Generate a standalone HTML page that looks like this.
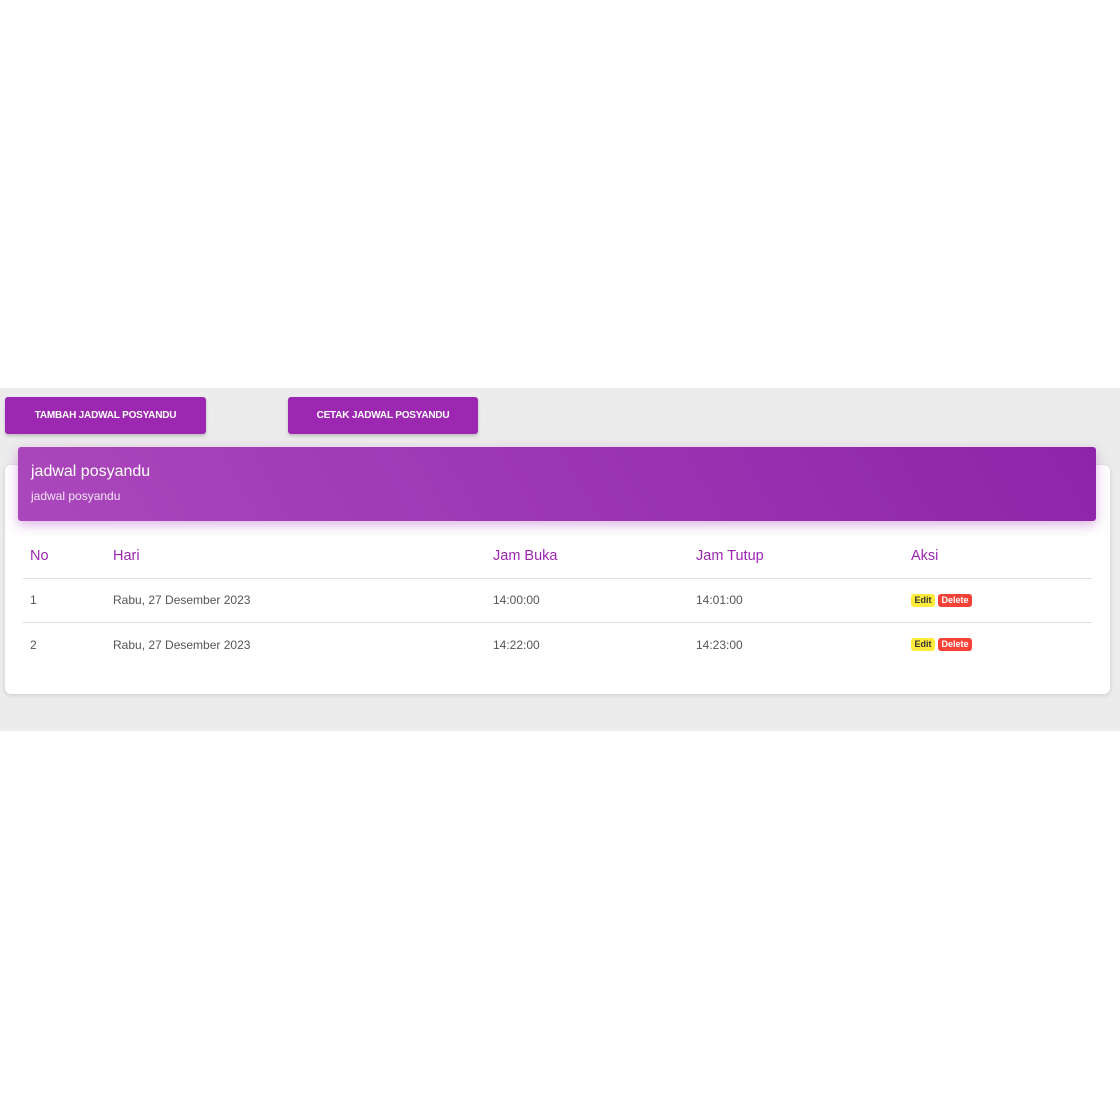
<!DOCTYPE html>
<html><head><style>
body{margin:0;width:1120px;height:1120px;background:#fff;font-family:"Liberation Sans",sans-serif;position:relative;overflow:hidden}
.bg{position:absolute;left:0;top:388px;width:1120px;height:343px;background:#ececec}
.btn{position:absolute;top:397px;height:37px;background:#9c27b0;color:#fff;font-size:10px;font-weight:bold;border-radius:3px;box-shadow:0 2px 3px rgba(0,0,0,.2);display:flex;align-items:center;justify-content:center;letter-spacing:-0.2px}
.card{position:absolute;left:5px;top:465px;width:1105px;height:229px;background:#fff;border-radius:6px;box-shadow:0 1px 4px rgba(0,0,0,.15)}
.hdr{position:absolute;left:18px;top:447px;width:1078px;height:74px;border-radius:3px;background:linear-gradient(60deg,#ab47bc,#8e24aa);box-shadow:0 4px 12px rgba(156,39,176,.35);color:#fff}
.t{position:absolute;font-size:12px;color:#555}
.h{position:absolute;font-size:14.5px;color:#9c27b0;top:548px}
.line{position:absolute;left:23px;width:1069px;height:1px;background:#ddd}
.b{position:absolute;height:13px;font-size:9px;font-weight:bold;border-radius:3px;line-height:13px;text-align:center}
</style></head><body>
<div class="bg"></div>
<div class="btn" style="left:5px;width:201px">TAMBAH JADWAL POSYANDU</div>
<div class="btn" style="left:288px;width:190px">CETAK JADWAL POSYANDU</div>
<div class="card"></div>
<div class="hdr">
<div style="position:absolute;left:13px;top:16px;font-size:16px">jadwal posyandu</div>
<div style="position:absolute;left:13px;top:42px;font-size:12px;opacity:.85">jadwal posyandu</div>
</div>
<div class="h" style="left:30px">No</div>
<div class="h" style="left:113px">Hari</div>
<div class="h" style="left:493px">Jam Buka</div>
<div class="h" style="left:696px">Jam Tutup</div>
<div class="h" style="left:911px">Aksi</div>
<div class="line" style="top:578px"></div>
<div class="line" style="top:622px"></div>
<div class="t" style="left:30px;top:593px">1</div>
<div class="t" style="left:113px;top:593px">Rabu, 27 Desember 2023</div>
<div class="t" style="left:493px;top:593px">14:00:00</div>
<div class="t" style="left:696px;top:593px">14:01:00</div>
<div class="b" style="left:911px;top:594px;width:24px;background:#ffeb3b;color:#333">Edit</div>
<div class="b" style="left:938px;top:594px;width:34px;background:#f44336;color:#fff">Delete</div>
<div class="t" style="left:30px;top:638px">2</div>
<div class="t" style="left:113px;top:638px">Rabu, 27 Desember 2023</div>
<div class="t" style="left:493px;top:638px">14:22:00</div>
<div class="t" style="left:696px;top:638px">14:23:00</div>
<div class="b" style="left:911px;top:638px;width:24px;background:#ffeb3b;color:#333">Edit</div>
<div class="b" style="left:938px;top:638px;width:34px;background:#f44336;color:#fff">Delete</div>
</body></html>
